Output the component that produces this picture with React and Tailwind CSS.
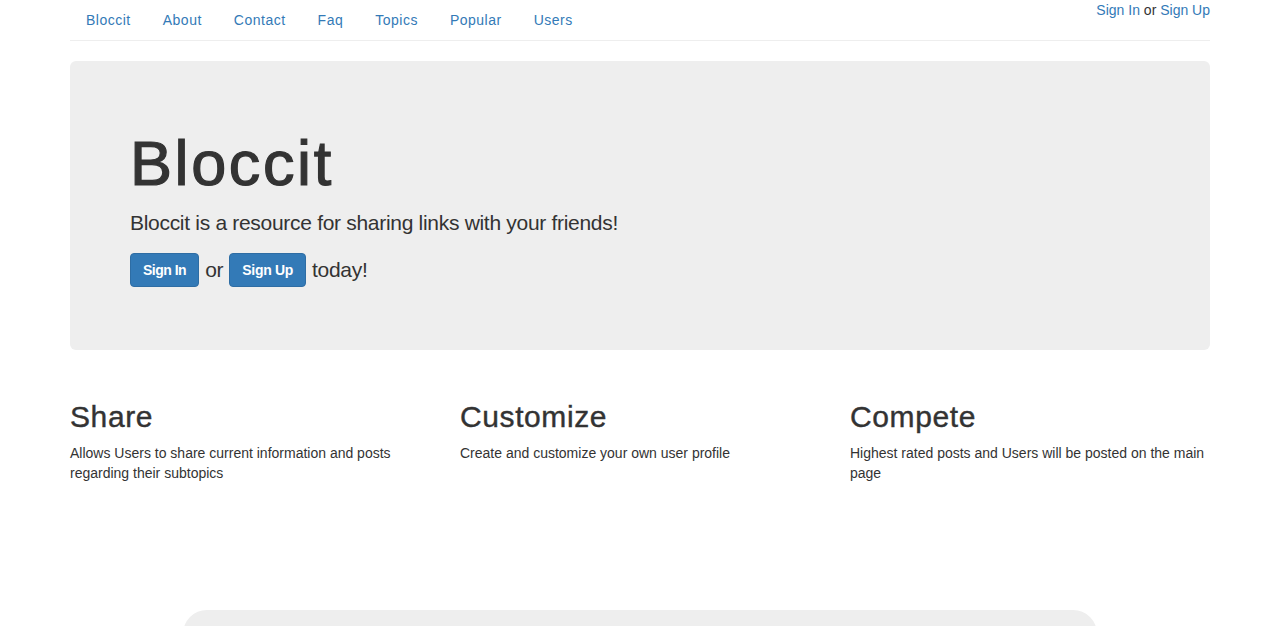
export default function App() {
  const links = ["Bloccit", "About", "Contact", "Faq", "Topics", "Popular", "Users"];
  const cols = [
    { t: "Share", d: "Allows Users to share current information and posts regarding their subtopics" },
    { t: "Customize", d: "Create and customize your own user profile" },
    { t: "Compete", d: "Highest rated posts and Users will be posted on the main page" },
  ];
  return (
    <div className="min-h-[626px] bg-white text-[#333] text-[14px] leading-[20px] overflow-hidden" style={{ fontFamily: '"Liberation Sans", Arial, sans-serif' }}>
      <div className="w-[1170px] mx-auto px-[15px]">
        <div className="flex justify-between items-start border-b border-[#eee]">
          <ul className="flex pl-[1px]">
            {links.map((l) => (
              <li key={l} className="mr-[2px]">
                <a className="block px-[15px] py-[10px] text-[#337ab7] tracking-[0.5px]">{l}</a>
              </li>
            ))}
          </ul>
          <div>
            <a className="text-[#337ab7]">Sign In</a> or <a className="text-[#337ab7]">Sign Up</a>
          </div>
        </div>
        <div className="mt-[20px] mb-[30px] bg-[#eee] rounded-[6px] px-[60px] pt-[48px] pb-[48px]">
          <h1 className="text-[63px] leading-[69px] mt-[20px] mb-[10px] font-normal tracking-[2.6px] [-webkit-text-stroke:1.2px_#333]">Bloccit</h1>
          <p className="text-[21px] leading-[30px] font-light mb-[15px] tracking-[-0.3px]">Bloccit is a resource for sharing links with your friends!</p>
          <p className="text-[21px] leading-[30px] font-light flex items-center mb-[15px] tracking-[-0.3px]">
            <a className="inline-block bg-[#337ab7] border border-[#2e6da4] text-white rounded-[4px] px-[12px] py-[6px] text-[14px] leading-[20px] font-bold tracking-[-0.5px]">Sign In</a>
            <span className="mx-[6px]">or</span>
            <a className="inline-block bg-[#337ab7] border border-[#2e6da4] text-white rounded-[4px] px-[12px] py-[6px] text-[14px] leading-[20px] font-bold tracking-[-0.3px]">Sign Up</a>
            <span className="ml-[6px]">today!</span>
          </p>
        </div>
        <div className="grid grid-cols-3 -mx-[15px]">
          {cols.map((c) => (
            <div key={c.t} className="px-[15px]">
              <h2 className="text-[30px] leading-[33px] mt-[20px] mb-[10px] font-normal tracking-[0.6px] [-webkit-text-stroke:0.4px_#333]">{c.t}</h2>
              <p className="mb-[10px]">{c.d}</p>
            </div>
          ))}
        </div>
        <div className="mt-[117px] mx-[113px] h-[40px] bg-[#eee] rounded-t-[24px]"></div>
      </div>
    </div>
  );
}
